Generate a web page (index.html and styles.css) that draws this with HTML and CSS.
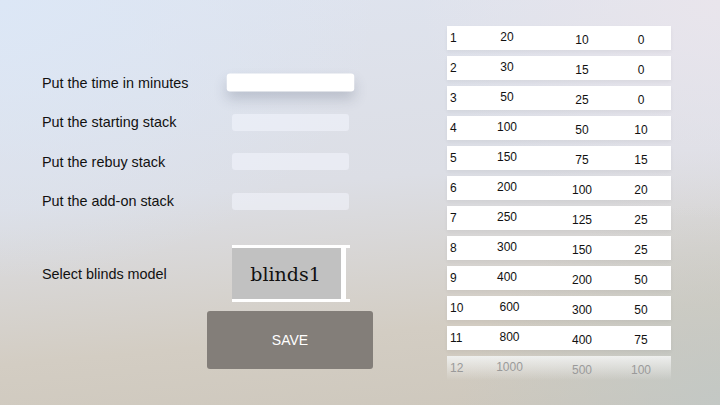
FILE: index.html
```html
<!DOCTYPE html>
<html lang="en">
<head>
    <meta charset="UTF-8">
    <meta name="viewport" content="width=device-width, initial-scale=1.0">
    <title>Tournament Settings</title>
    <link rel="stylesheet" href="styles.css">
</head>
<body>
    <div class="screen">

        <div class="settings">
            <div class="form-row">
                <label for="time">Put the time in minutes</label>
                <input type="text" id="time" class="field focused">
            </div>
            <div class="form-row">
                <label for="startStack">Put the starting stack</label>
                <input type="text" id="startStack" class="field">
            </div>
            <div class="form-row">
                <label for="rebuyStack">Put the rebuy stack</label>
                <input type="text" id="rebuyStack" class="field">
            </div>
            <div class="form-row">
                <label for="addonStack">Put the add-on stack</label>
                <input type="text" id="addonStack" class="field">
            </div>

            <div class="blinds-row">
                <span class="blinds-label">Select blinds model</span>
                <div class="picker">
                    <span class="picker-value">blinds1</span>
                    <span class="picker-bar"></span>
                </div>
            </div>

            <button type="button" class="save-btn">SAVE</button>
        </div>

        <!-- blinds levels -->
        <div class="levels">
            <div class="level"><span class="c1">1</span><span class="c2">20</span><span class="c3">10</span><span class="c4">0</span></div>
            <div class="level"><span class="c1">2</span><span class="c2">30</span><span class="c3">15</span><span class="c4">0</span></div>
            <div class="level"><span class="c1">3</span><span class="c2">50</span><span class="c3">25</span><span class="c4">0</span></div>
            <div class="level"><span class="c1">4</span><span class="c2">100</span><span class="c3">50</span><span class="c4">10</span></div>
            <div class="level"><span class="c1">5</span><span class="c2">150</span><span class="c3">75</span><span class="c4">15</span></div>
            <div class="level"><span class="c1">6</span><span class="c2">200</span><span class="c3">100</span><span class="c4">20</span></div>
            <div class="level"><span class="c1">7</span><span class="c2">250</span><span class="c3">125</span><span class="c4">25</span></div>
            <div class="level"><span class="c1">8</span><span class="c2">300</span><span class="c3">150</span><span class="c4">25</span></div>
            <div class="level"><span class="c1">9</span><span class="c2">400</span><span class="c3">200</span><span class="c4">50</span></div>
            <div class="level wide"><span class="c1">10</span><span class="c2">600</span><span class="c3">300</span><span class="c4">50</span></div>
            <div class="level wide"><span class="c1">11</span><span class="c2">800</span><span class="c3">400</span><span class="c4">75</span></div>
            <div class="level wide fading"><span class="c1">12</span><span class="c2">1000</span><span class="c3">500</span><span class="c4">100</span></div>
        </div>

    </div>
</body>
</html>
```

FILE: styles.css
```css
* {
    margin: 0;
    padding: 0;
    box-sizing: border-box;
    font-family: 'Liberation Sans', Arial, sans-serif;
}

body {
    width: 720px;
    height: 405px;
    overflow: hidden;
    background-color: #d9dbe0;
    background-image:
        radial-gradient(ellipse 260px 200px at 720px 405px, rgba(194, 200, 197, 0.9), rgba(194, 200, 197, 0)),
        radial-gradient(ellipse 300px 220px at 720px 0px, rgba(233, 229, 236, 1), rgba(233, 229, 236, 0)),
        radial-gradient(ellipse 380px 280px at 0px 0px, rgba(220, 231, 246, 1), rgba(220, 231, 246, 0)),
        linear-gradient(175deg, #dfe4ef 0%, #dcdee5 45%, #d3cdc3 78%, #cdc7bc 100%);
}

.screen {
    display: flex;
    height: 100%;
}

.settings {
    width: 447px;
    padding: 63px 0 0 42px;
}

.form-row {
    display: flex;
    align-items: center;
    height: 39.5px;
}

.form-row label,
.blinds-label {
    width: 190px;
    font-size: 14.4px;
    color: #111;
}

.field {
    width: 117px;
    height: 17px;
    border: none;
    border-radius: 3px;
    background-color: rgba(245, 248, 255, 0.5);
    outline: none;
}

.field.focused {
    background-color: #fff;
    transform: scale(1.09, 1.06);
    box-shadow: 0 7px 12px rgba(60, 70, 90, 0.22);
}

.blinds-row {
    display: flex;
    align-items: center;
    margin-top: 24px;
}

.picker {
    display: flex;
    align-items: stretch;
    width: 118px;
    height: 57px;
    border-top: 3px solid #fff;
    border-bottom: 3px solid #fff;
}

.picker-value {
    display: flex;
    align-items: center;
    justify-content: center;
    width: 109px;
    padding-right: 2px;
    background-color: #c1c1c1;
    font-family: 'DejaVu Serif', serif;
    font-size: 19px;
    color: #111;
}

.picker-bar {
    width: 5px;
    background-color: #fff;
}

.save-btn {
    display: block;
    width: 166px;
    height: 58px;
    margin: 9px 0 0 165px;
    border: none;
    border-radius: 3px;
    background-color: #837e79;
    color: #fff;
    font-size: 14px;
    cursor: pointer;
}

.levels {
    width: 224px;
    padding-top: 26px;
}

.level {
    display: flex;
    align-items: center;
    height: 24px;
    margin-bottom: 6px;
    background-color: #fff;
    box-shadow: 0 2px 4px rgba(0, 0, 0, 0.05);
    font-size: 12px;
    color: #111;
}

.level span {
    text-align: center;
    color: #111;
}

.level .c1 {
    width: 40px;
    padding-left: 3px;
    text-align: left;
}

.level .c2 {
    width: 40px;
    padding-bottom: 3px;
}

.level.wide .c2 {
    padding-left: 5px;
}

.level .c3 {
    width: 40px;
    margin-left: 35px;
    padding-top: 3px;
}

.level .c4 {
    width: 40px;
    margin-left: 19px;
    padding-top: 3px;
}

.level.fading {
    background-color: transparent;
    background-image: linear-gradient(to bottom, rgba(240, 241, 240, 0.95), rgba(240, 241, 240, 0));
    box-shadow: none;
}

.level.fading span {
    color: #9a9a9a;
}
```
